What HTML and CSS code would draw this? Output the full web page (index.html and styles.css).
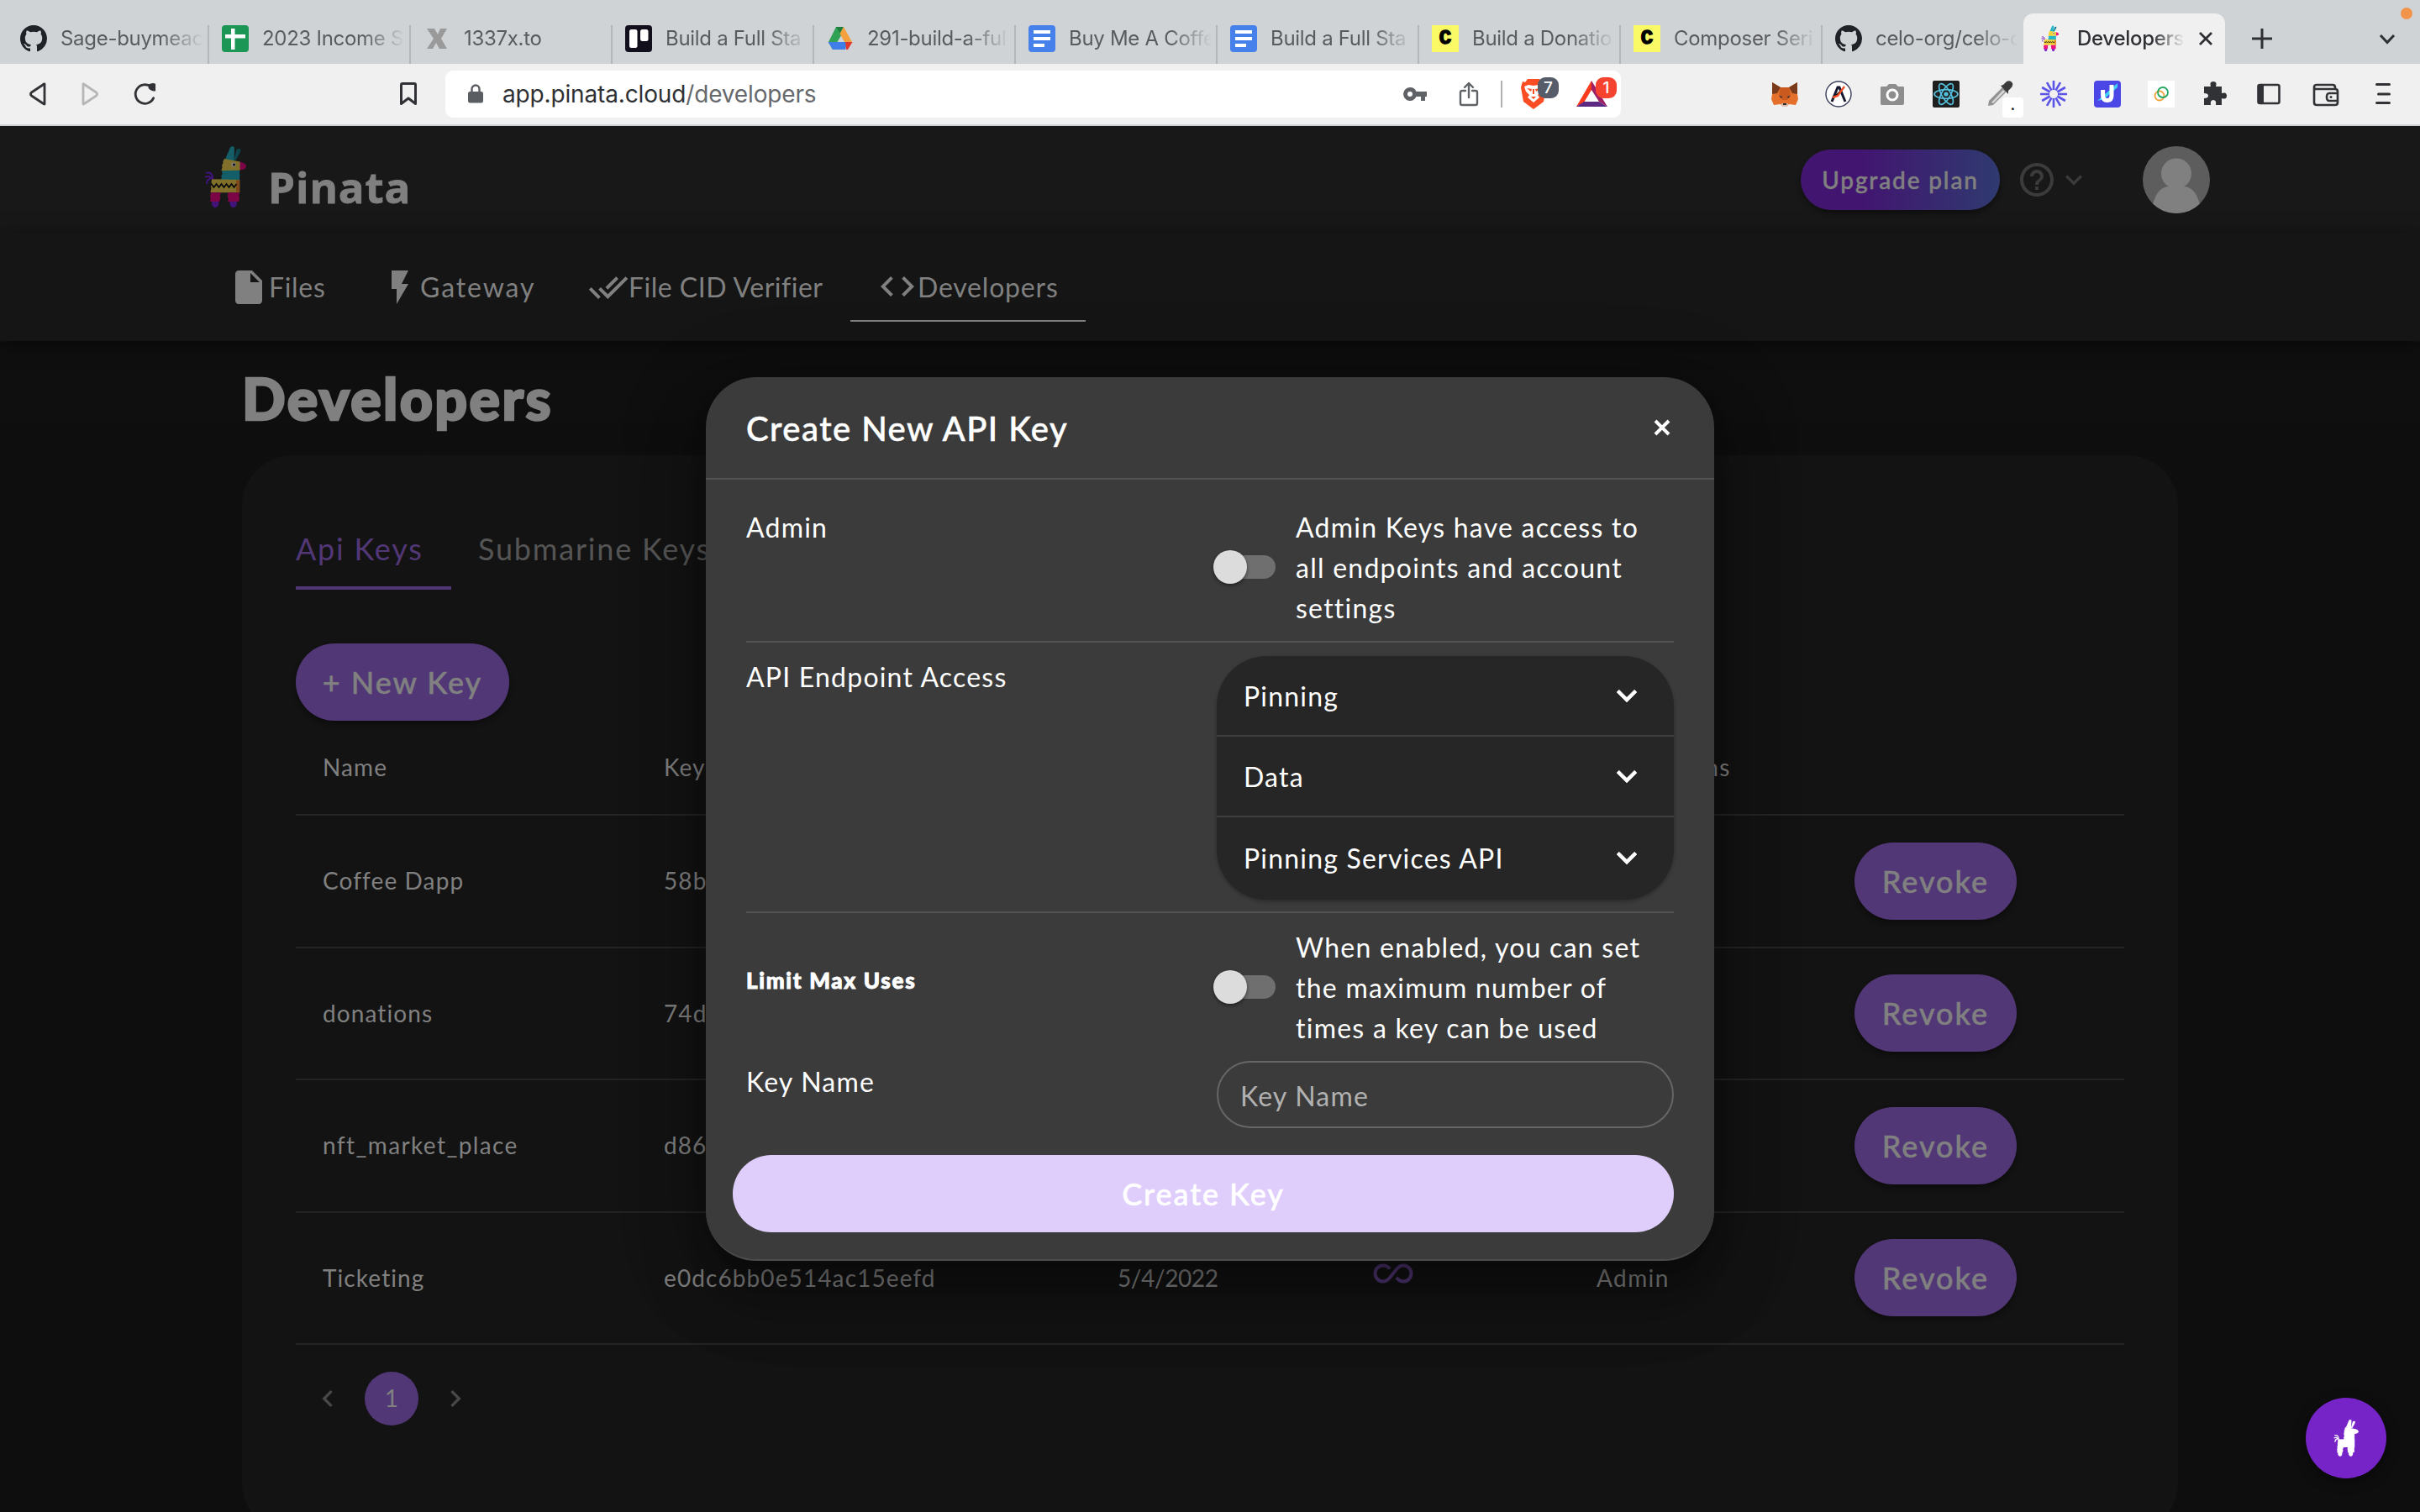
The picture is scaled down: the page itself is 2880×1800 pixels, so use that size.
FILE: index.html
```html
<!DOCTYPE html>
<html lang="en">
<head>
<meta charset="utf-8">
<title>Pinata – Developers</title>
<link rel="stylesheet" href="styles.css">
</head>
<body>
<svg class="defs" width="0" height="0">
  <symbol id="github" viewBox="0 0 16 16"><path fill="#1f2328" d="M8 0C3.58 0 0 3.58 0 8c0 3.54 2.29 6.53 5.47 7.59.4.07.55-.17.55-.38 0-.19-.01-.82-.01-1.49-2.01.37-2.53-.49-2.69-.94-.09-.23-.48-.94-.82-1.13-.28-.15-.68-.52-.01-.53.63-.01 1.08.58 1.23.82.72 1.21 1.87.87 2.33.66.07-.52.28-.87.51-1.07-1.78-.2-3.64-.89-3.64-3.95 0-.87.31-1.59.82-2.15-.08-.2-.36-1.02.08-2.12 0 0 .67-.21 2.2.82.64-.18 1.32-.27 2-.27.68 0 1.36.09 2 .27 1.53-1.04 2.2-.82 2.2-.82.44 1.1.16 1.92.08 2.12.51.56.82 1.27.82 2.15 0 3.07-1.87 3.75-3.65 3.95.29.25.54.73.54 1.48 0 1.07-.01 1.93-.01 2.2 0 .21.15.46.55.38A8.01 8.01 0 0016 8c0-4.42-3.58-8-8-8z"/></symbol>
  <symbol id="docs" viewBox="0 0 32 32"><rect width="32" height="32" rx="4" fill="#4680ea"/><path fill="#fff" d="M6 6h20v4H6zM6 14h20v4H6zM6 22h13v4H6z"/></symbol>
  <symbol id="llama" viewBox="0 0 52 76">
    <path fill="none" stroke="var(--violet)" stroke-width="2" d="M2 33q6-2 8 4v4M1 38q6-3 8 2M3 46q0-5 5-7"/>
    <path fill="var(--teal-dark)" d="M35 18l3.6-13q3-2 5 0l-1 4-5 9z"/>
    <path fill="var(--teal)" d="M24.8 17L31 2.500q2.500-2.500 5 0L35.500 19zM21.600 29.500h20.600V42H19l2.200-4-1.200-1 2-3.500-1-.5z"/>
    <path fill="var(--pink)" d="M42 19.500q8 1.500 8 5.500t-8 4.500z"/>
    <path fill="var(--yellow)" d="M23.900 16l18.700 3.500v10.200l-22.300.6 1.500-5-1-.5 2-4.500-.8-.3zM9 40.300L42.200 41v15.300H7.400l1.200-6-.9-.6 1.600-4.500-.8-.6z"/>
    <path fill="var(--orange)" d="M38 41.500h4.200v14h-4.200z"/>
    <path fill="none" stroke="var(--dark)" stroke-width="1.800" d="M8.500 46l3 4 3-4 3 4 3-4 3 4 3-4 3 4 3-4 3 4 3-4"/>
    <circle cx="35" cy="23" r="2.600" fill="var(--eye)"/><circle cx="35.500" cy="23" r="1.500" fill="var(--dark)"/>
    <ellipse cx="13.200" cy="68.500" rx="4.200" ry="5.800" fill="var(--violet)"/><ellipse cx="34.600" cy="68.500" rx="4.200" ry="5.800" fill="var(--violet)"/>
    <path fill="var(--pink)" d="M8 56.300h12l-1.500 5 1 1-1.500 4.700H6.800l1.200-4-1-1zM28.500 56.300h13.500l-.6 5 .6 1-.8 4.700H28l1-4-1.200-1z"/>
  </symbol>
  <symbol id="chev" viewBox="0 0 24 24"><path d="M7.410 8.590L12 13.170l4.590-4.580L18 10l-6 6-6-6z"/></symbol>
  <symbol id="back" viewBox="0 0 32 32"><path fill="none" stroke-width="2.800" stroke-linejoin="round" d="M25 4v24q-1 0-2-1L9.500 18q-2-2 0-4L23 5q1-1 2-1z"/></symbol>
</svg>

<header class="tabstrip">
  <div class="tab"><svg class="fav"><use href="#github"/></svg><span class="tab-title">Sage-buymeac</span></div>
  <div class="tab"><svg class="fav" viewBox="0 0 32 32"><rect width="32" height="32" rx="4" fill="#1b9655"/><path fill="#fff" d="M11 4h4.500v7H28v4.500H15.500V29H11V15.500H4V11h7z"/></svg><span class="tab-title">2023 Income S</span></div>
  <div class="tab"><svg class="fav" viewBox="0 0 32 32"><path fill="#9a9a9a" d="M4 4h9l4 7 3-7h8l-7 12 7 12h-9l-4-7-4 7H4l8-12z"/></svg><span class="tab-title">1337x.to</span></div>
  <div class="tab"><svg class="fav" viewBox="0 0 32 32"><rect width="32" height="32" rx="4" fill="#120f1c"/><rect x="5" y="5" width="9.500" height="22" rx="2.500" fill="#fff"/><rect x="18" y="5" width="9.500" height="14" rx="2.500" fill="#fff"/></svg><span class="tab-title">Build a Full Sta</span></div>
  <div class="tab"><svg class="fav" viewBox="0 0 32 32"><path fill="#31a155" d="M11 2h5l3 7L7 29 2 20z"/><path fill="#1f7f3e" d="M11 2h9l-4 8z"/><path fill="#f4a03c" d="M20 2l10 18h-9L15.500 10z"/><path fill="#3f7de8" d="M1.500 20H24l-2 9H7z"/><path fill="#e0382f" d="M22 20h8.500L25 29h-2z"/></svg><span class="tab-title">291-build-a-ful</span></div>
  <div class="tab"><svg class="fav"><use href="#docs"/></svg><span class="tab-title">Buy Me A Coffe</span></div>
  <div class="tab"><svg class="fav"><use href="#docs"/></svg><span class="tab-title">Build a Full Sta</span></div>
  <div class="tab"><span class="fav fav-c">C</span><span class="tab-title">Build a Donatio</span></div>
  <div class="tab"><span class="fav fav-c">C</span><span class="tab-title">Composer Seri</span></div>
  <div class="tab"><svg class="fav"><use href="#github"/></svg><span class="tab-title">celo-org/celo-c</span></div>
  <div class="tab active"><svg class="fav llama bright"><use href="#llama"/></svg><span class="tab-title">Developers</span>
    <svg class="tab-close" viewBox="0 0 18 18"><path d="M2 2l14 14M16 2L2 16"/></svg></div>
  <svg class="tab-plus" viewBox="0 0 26 26"><path d="M13 1v24M1 13h24"/></svg>
  <svg class="tab-more" viewBox="0 0 20 14"><path d="M2 2l8 8.500L18 2"/></svg>
  <span class="dot"></span>
</header>

<div class="toolbar">
  <svg class="ic nav-btn"><use href="#back"/></svg>
  <svg class="ic nav-btn flip"><use href="#back"/></svg>
  <svg class="ic reload" viewBox="0 0 32 32"><path fill="none" stroke="#303236" stroke-width="3" stroke-linecap="round" d="M28.500 21A12 12 0 1 1 25.500 7"/><path fill="#303236" d="M22 8.500V4q5-3 9-1v9q-5 1-9-3.500z"/></svg>
  <svg class="ic bookmark" viewBox="0 0 32 32"><path fill="none" stroke="#303236" stroke-width="3" stroke-linejoin="round" d="M7.500 5q0-1.500 1.500-1.500h14q1.500 0 1.500 1.500v22.500L16 21l-8.500 6.500z"/></svg>
  <div class="urlbar">
    <svg class="lock" viewBox="0 0 18 24"><rect y="9" width="18" height="13.500" rx="2.500" fill="#5a5d61"/><path fill="none" stroke="#5a5d61" stroke-width="2.400" d="M4.500 10V6a4.500 4.500 0 0 1 9 0v4"/></svg>
    <span class="url">app.pinata.cloud<span class="path">/developers</span></span>
    <svg class="key" viewBox="0 0 28 16"><path fill="#5f6266" fill-rule="evenodd" d="M8 0a8 8 0 0 1 7.500 5H28v6h-2v5h-5v-5h-5.500A8 8 0 1 1 8 0zm0 5a3 3 0 1 0 0 6 3 3 0 0 0 0-6z"/></svg>
    <svg class="share" viewBox="0 0 24 30"><path fill="none" stroke="#5f6266" stroke-width="2.400" stroke-linecap="round" stroke-linejoin="round" d="M8 11H4q-2 0-2 2v13q0 2 2 2h16q2 0 2-2V13q0-2-2-2h-4M12 19V2M7 7l5-5 5 5"/></svg>
    <span class="sep"></span>
    <div class="badged brave"><svg viewBox="0 0 30 36"><path fill="#fb4d24" d="M8 0h14l3 4 3-1 2 7-3 17-12 9-12-9L0 10l2-7 3 1z"/><path fill="#fff" d="M4 9l5-2 6 1 6-1 5 2-2 6-4 4 2 3-7 6-7-6 2-3-4-4z"/><path fill="#fb4d24" d="M7 11l6 1-1 3zM23 11l-6 1 1 3zM12 21h6l-3 3zM14 12h2v6h-2z"/></svg><span class="badge gray">7</span></div>
    <div class="badged bat"><svg viewBox="0 0 38 32"><path fill="#fb3b1e" d="M18 0v11L9 26 0 31z"/><path fill="#9e1f63" d="M18 0l19 31-10-6-9-14z"/><path fill="#5c2a83" d="M0 31l9-6h18l10 6z"/></svg><span class="badge red">1</span></div>
  </div>
  <div class="extensions">
    <svg class="ic" viewBox="0 0 32 32"><path fill="#e4702c" d="M1 2l10 6h10l10-6v14l1 6-3 7-8-1-3 3h-4l-3-3-8 1-3-7 1-6z"/><path fill="#793b1c" d="M1 2l10 6-4 7-6 1zM31 2L21 8l4 7 6 1z"/><path fill="#c9591f" d="M11 8h10l2 9-4 6h-6l-4-6z"/><path fill="#d8c1b3" d="M12 27h8l-1 4h-6z"/><path fill="#2b2b33" d="M9 18l4 1-1 2zM23 18l-4 1 1 2zM14 27h4v2h-4z"/></svg>
    <svg class="ic" viewBox="0 0 32 32"><circle cx="16" cy="16" r="15" fill="#fff" stroke="#3a3f5c" stroke-width="1.400"/><path fill="none" stroke="#15182e" stroke-width="3" d="M8 25l7-17h2l7 17"/><path stroke="#f04e23" stroke-width="2.400" d="M9 20l6-2 8-11"/></svg>
    <svg class="ic" viewBox="0 0 32 32"><path fill="#8d8d8d" d="M3 7h6l3-3h8l3 3h6q1 0 1 2v18q0 2-2 2H3q-1 0-1-2V9q0-2 1-2z"/><circle cx="16" cy="17" r="6" fill="#8d8d8d" stroke="#fff" stroke-width="3"/></svg>
    <svg class="ic" viewBox="0 0 32 32"><rect width="32" height="32" rx="2" fill="#1e1e1e"/><g fill="none" stroke="#53c1de" stroke-width="1.700"><ellipse cx="16" cy="16" rx="14" ry="5.300"/><ellipse cx="16" cy="16" rx="14" ry="5.300" transform="rotate(60 16 16)"/><ellipse cx="16" cy="16" rx="14" ry="5.300" transform="rotate(120 16 16)"/></g><circle cx="16" cy="16" r="2.600" fill="#53c1de"/></svg>
    <div class="badged pipette"><svg class="ic" viewBox="0 0 32 32"><path fill="#929292" d="M2 30l1-6L19 8l5 5L8 29z"/><path fill="#d8d8d8" d="M6 26L20 11l2 2L8 27z"/><path fill="#3b3b3b" d="M17 6l3-1 4-4q5-2 7 2 1 3-2 6l-3 3v4z"/></svg><span class="badge white">.</span></div>
    <svg class="ic" viewBox="0 0 32 32"><g stroke="#5a55e6" stroke-width="2.600"><path d="M16 0v11M16 21v11M0 16h11M21 16h11M8 2.140l5.500 9.530M18.500 20.330l5.500 9.530M2.140 8l9.530 5.500M20.330 18.500l9.530 5.500M2.140 24l9.530-5.500M20.330 13.500l9.530-5.500M8 29.860l5.500-9.530M18.500 11.670l5.500-9.530"/></g></svg>
    <svg class="ic" viewBox="0 0 32 32"><rect width="32" height="32" rx="4" fill="#4b47e6"/><path fill="#3fd0f2" d="M28 3L4 24l8-2L28 8z"/><path fill="none" stroke="#fff" stroke-width="5" d="M21 5v12.500q0 6-5.200 6T10.600 17.500V11"/></svg>
    <svg class="ic" viewBox="0 0 32 32"><rect width="32" height="32" fill="#fff"/><circle cx="14" cy="18" r="5.500" fill="none" stroke="#f2a23c" stroke-width="1.800"/><circle cx="18" cy="14" r="6" fill="none" stroke="#22a860" stroke-width="1.800"/></svg>
    <svg class="ic" viewBox="0 0 32 32"><path fill="#303236" d="M3 7h8q-2-6 3-6t3 6h7v8q6-2 6 3t-6 3v8h-7q1-6-3-6t-3 6H3v-8q5 0 5-3t-5-3z"/></svg>
    <svg class="ic" viewBox="0 0 32 32"><rect x="3.500" y="5" width="25" height="22" rx="2" fill="none" stroke="#303236" stroke-width="2.600"/><path fill="#303236" d="M3 5h7v22H3z"/></svg>
    <svg class="ic wide" viewBox="0 0 32 32"><path fill="none" stroke="#303236" stroke-width="2.600" d="M2 8v18q0 3 3 3h22q3 0 3-3V13q0-3-3-3H5q-3 0-3-2.500T5 5h19q3 0 3 3v2M31 15H20q-3 0-3 4.500t3 4.500h11"/><circle cx="22" cy="19.500" r="1.500" fill="#303236"/></svg>
    <svg class="ic wide" viewBox="0 0 32 32"><path stroke="#303236" stroke-width="3" stroke-linecap="round" d="M8.500 4.500h15M10.500 16h13M8.500 26.500h15"/></svg>
  </div>
</div>

<div class="app-header">
  <svg class="brand-mark llama dim"><use href="#llama"/></svg>
  <span class="brand">Pinata</span>
  <button class="upgrade">Upgrade plan</button>
  <svg class="help" viewBox="2 2 20 20"><path d="M11 18h2v-2h-2v2zm1-16C6.480 2 2 6.480 2 12s4.480 10 10 10 10-4.480 10-10S17.520 2 12 2zm0 18c-4.410 0-8-3.590-8-8s3.590-8 8-8 8 3.590 8 8-3.590 8-8 8zm0-14c-2.210 0-4 1.790-4 4h2c0-1.100.9-2 2-2s2 .9 2 2c0 2-3 1.750-3 5h2c0-2.250 3-2.500 3-5 0-2.210-1.790-4-4-4z"/></svg>
  <svg class="help-chev"><use href="#chev"/></svg>
  <svg class="avatar" viewBox="0 0 80 80"><clipPath id="round"><circle cx="40" cy="40" r="40"/></clipPath><g clip-path="url(#round)"><path fill="#5d5d5d" d="M0 0h80v80H0z"/><circle cx="40" cy="32.500" r="18" fill="#808080"/><path fill="#808080" d="M12 70q5-22 20-22h16q15 0 20 22v12H12z"/></g></svg>
</div>

<nav class="app-nav">
  <a class="nav-files"><svg viewBox="0 0 24 24"><path d="M6 2c-1.100 0-2 .9-2 2v16c0 1.100.9 2 2 2h12c1.100 0 2-.9 2-2V8l-6-6H6zm7 7V3.500L18.500 9H13z"/></svg>Files</a>
  <a class="nav-gateway"><svg viewBox="0 0 24 24"><path d="M7 2v11h3v9l7-12h-4l4-8z"/></svg>Gateway</a>
  <a class="nav-cid"><svg viewBox="0 0 24 24"><path d="M18 7l-1.410-1.410-6.340 6.340 1.410 1.410L18 7zm4.240-1.410L11.660 16.170 7.480 12l-1.410 1.410L11.660 19l12-12-1.420-1.410zM.41 13.410L6 19l1.410-1.410L1.830 12 .41 13.410z"/></svg>File CID Verifier</a>
  <a class="nav-dev"><svg viewBox="0 0 24 24"><path d="M9.400 16.600L4.800 12l4.600-4.600L8 6l-6 6 6 6 1.400-1.400zm5.200 0l4.600-4.600-4.600-4.600L16 6l6 6-6 6-1.400-1.400z"/></svg>Developers</a>
</nav>

<main>
  <h1>Developers</h1>
  <section class="card">
    <div class="card-tabs"><span class="on">Api Keys</span><span>Submarine Keys</span></div>
    <button class="btn new-key">+ New Key</button>
    <div class="table">
      <div class="row head"><span>Name</span><span>Key</span><span></span><span></span><span class="perm-head">Permissions</span><span></span></div>
      <div class="row"><span>Coffee Dapp</span><span>58b</span><span></span><span></span><span></span><button class="btn">Revoke</button></div>
      <div class="row"><span>donations</span><span>74d</span><span></span><span></span><span></span><button class="btn">Revoke</button></div>
      <div class="row"><span class="wider">nft_market_place</span><span>d86</span><span></span><span></span><span></span><button class="btn">Revoke</button></div>
      <div class="row"><span>Ticketing</span><span>e0dc6bb0e514ac15eefd</span><span class="date">5/4/2022</span><span><svg class="inf" viewBox="0 0 48 24"><path d="M20 17c-2.500 3-5 4.500-8 4.500A9.500 9.500 0 0 1 12 2.500c4 0 6.500 2 8 4M28 17c2 2.500 4.500 4.500 8 4.500a9.500 9.500 0 0 0 0-19c-3 0-5.500 1.500-8 4.500L20 17"/></svg></span><span class="wider">Admin</span><button class="btn">Revoke</button></div>
    </div>
    <div class="pager">
      <svg class="left"><use href="#chev"/></svg><span class="page">1</span><svg class="right"><use href="#chev"/></svg>
    </div>
  </section>
</main>

<div class="modal">
  <div class="modal-head"><h2>Create New API Key</h2><svg viewBox="0 0 20 20"><path d="M2 2l16 16M18 2L2 18"/></svg></div>
  <div class="modal-body">
    <div class="field admin"><span class="label">Admin</span>
      <div class="control"><span class="toggle"></span><p>Admin Keys have access to<br>all endpoints and account<br>settings</p></div></div>
    <div class="field endpoints"><span class="label">API Endpoint Access</span>
      <div class="accordion">
        <div><span>Pinning</span><svg><use href="#chev"/></svg></div>
        <div><span>Data</span><svg><use href="#chev"/></svg></div>
        <div><span>Pinning Services API</span><svg><use href="#chev"/></svg></div>
      </div></div>
    <div class="field limit"><span class="label strong">Limit Max Uses</span>
      <div class="control"><span class="toggle"></span><p>When enabled, you can set<br>the maximum number of<br>times a key can be used</p></div></div>
    <div class="field name"><span class="label">Key Name</span><div class="input">Key Name</div></div>
    <button class="create">Create Key</button>
  </div>
</div>

<div class="fab"><svg class="llama mono"><use href="#llama"/></svg></div>
</body>
</html>
```
FILE: styles.css
```css
* { box-sizing: border-box; }
body {
  margin: 0; width: 2880px; height: 1800px; overflow: hidden; position: relative;
  display: flex; flex-direction: column;
  background: #0f0f0f; color: #808080;
  font-family: Lato, "Open Sans", sans-serif; font-size: 32px; letter-spacing: 1.1px;
}
svg { display: block; flex: none; }
button { border: 0; font: inherit; letter-spacing: inherit; color: inherit; padding: 0; }
h1, h2, p { margin: 0; }
.defs { position: absolute; }

/* browser tabs */
.tabstrip {
  height: 76px; flex: none; display: flex; align-items: flex-end; padding-left: 8px;
  background: #d0d3d6; position: relative;
  font-family: Inter, sans-serif; font-size: 24px; letter-spacing: -0.3px; color: #595b5f;
}
.tab { width: 240px; height: 60px; display: flex; align-items: center; padding-left: 16px; gap: 16px; position: relative; }
.tab::after { content: ""; position: absolute; right: -1px; top: 14px; bottom: 0; width: 2px; background: #b3b6ba; }
.tab:nth-child(10)::after, .tab.active::after { display: none; }
.tab.active { background: #f0f0f0; border-radius: 12px 12px 0 0; color: #2e3034; font-weight: 500; }
.fav { width: 32px; height: 32px; flex: none; }
.fav-c { background: #f9fa66; color: #000; font: bold 24px/31px "Liberation Mono", monospace; text-align: center; letter-spacing: 0; -webkit-text-stroke: 1.5px #000; }
.tab-title {
  width: 170px; overflow: hidden; white-space: nowrap; line-height: 32px;
  -webkit-mask-image: linear-gradient(90deg, #000 70%, transparent 100%);
  mask-image: linear-gradient(90deg, #000 70%, transparent 100%);
}
.active .tab-title { width: 128px; }
.tab-close { width: 18px; height: 18px; stroke: #2e3034; stroke-width: 2.8; fill: none; }
.tab-plus { width: 26px; height: 26px; margin: 0 0 17px 31px; stroke: #2e3034; stroke-width: 3; }
.tab-more { width: 20px; height: 14px; margin: 0 0 22px 126px; stroke: #2e3034; stroke-width: 3; fill: none; }
.dot { position: absolute; left: 2857px; top: 9px; width: 14px; height: 14px; border-radius: 50%; background: #f3944d; }

/* browser toolbar */
.toolbar {
  height: 74px; flex: none; display: flex; align-items: center; padding-left: 28px;
  background: #f0f0f0; border-bottom: 2px solid #d0d3d6;
}
.ic { width: 32px; height: 32px; }
.toolbar > .ic { margin-right: 32px; }
.nav-btn { stroke: #303236; }
.nav-btn.flip { transform: scaleX(-1); stroke: #b5b6b8; }
.toolbar > .reload { width: 30px; height: 30px; }
.toolbar > .bookmark { margin: 0 28px 0 252px; }
.urlbar {
  width: 1399px; height: 56px; border-radius: 9px; background: #fff; display: flex; align-items: center; padding-left: 27px;
  font-family: Inter, sans-serif; font-size: 28px; letter-spacing: -0.15px; color: #2e3034;
}
.lock { width: 18px; height: 24px; }
.url { margin-left: 23px; width: 1072px; line-height: 40px; }
.path { color: #66686c; }
.key { width: 28px; height: 16px; }
.share { width: 24px; height: 30px; margin-left: 38px; }
.sep { width: 2px; height: 32px; background: #b0b0b0; margin: 0 22px 0 26px; }
.badged { position: relative; }
.brave svg { width: 30px; height: 36px; }
.bat { margin-left: 36px; }
.bat svg { width: 38px; height: 32px; }
.badge {
  position: absolute; width: 25px; height: 25px; border-radius: 9px; text-align: center; letter-spacing: 0;
  font: 500 19px/25px Inter, sans-serif; color: #fff;
}
.gray { left: 20px; top: -2px; background: #565c69; }
.red { left: 23px; top: -4px; background: #f5432f; }
.white { left: 19px; top: 20px; height: 24px; background: #fff; color: #222; border-radius: 4px; line-height: 18px; }
.extensions { display: flex; gap: 32px; margin-left: 179px; }
.wide { margin-left: 4px; }

/* pinata header */
.app-header { height: 127px; flex: none; display: flex; align-items: center; padding: 0 250px 0 243px; background: #181818; }
.llama { --teal: #21b7c9; --teal-dark: #14808d; --yellow: #f2d13a; --pink: #f0127f; --violet: #7a24c9; --orange: #f08a2c; --dark: #141414; --eye: #fff; }
.dim { --teal: #135e68; --teal-dark: #0d444b; --yellow: #80702a; --pink: #7c0547; --violet: #41147a; --orange: #80491c; --dark: #0c0c0c; --eye: #808080; }
.mono { --teal: #fff; --teal-dark: #fff; --yellow: #fff; --pink: #fff; --violet: #fff; --orange: #fff; --dark: #fff; }
.brand-mark { width: 52px; height: 76px; margin-top: -5px; }
.brand { margin: 16px auto 0 24px; font: 700 51px/60px "Open Sans", sans-serif; letter-spacing: .9px; -webkit-text-stroke: .8px #808080; }
.upgrade {
  width: 237px; height: 72px; border-radius: 36px; margin-top: 1px; font-size: 28px; font-weight: 500; letter-spacing: 1.85px; line-height: 66px;
  background: linear-gradient(90deg, #421570 30%, #2f3a70 100%); box-shadow: 0 4px 6px rgba(0,0,0,.4);
}
.help { width: 40px; height: 40px; margin-left: 24px; fill: #3b3b3b; }
.help-chev { width: 40px; height: 40px; margin-left: 4px; fill: #3b3b3b; }
.avatar { width: 80px; height: 80px; margin-left: 62px; }

.app-nav { height: 129px; flex: none; display: flex; align-items: center; padding-left: 240px; background: #151515; box-shadow: 0 4px 20px rgba(0,0,0,.5); }
.app-nav a { height: 83px; padding: 2px 32px 0; display: flex; align-items: center; white-space: nowrap; border-bottom: 2px solid transparent; }
.app-nav svg { width: 48px; height: 48px; fill: #808080; }
.app-nav .nav-files { width: 180px; letter-spacing: .7px; }
.app-nav .nav-gateway { width: 248px; letter-spacing: 1.9px; }
.app-nav .nav-cid { width: 344px; letter-spacing: .5px; }
.app-nav .nav-dev { width: 280px; letter-spacing: .8px; border-color: #808080; padding-top: 1px; }

/* page */
main { flex: none; padding: 28px 288px 0; background: linear-gradient(180deg, transparent, #0e0e0e 200px); }
h1 { height: 108px; font-size: 68px; line-height: 80px; font-weight: 900; letter-spacing: 2.4px; -webkit-text-stroke: 2.6px #808080; }
.card { height: 1284px; border-radius: 60px; background: #131313; padding: 83px 64px 0; }
.card-tabs { display: flex; gap: 32px; font-size: 36px; letter-spacing: 1.8px; color: #555; }
.card-tabs span { height: 77px; line-height: 56px; }
.card-tabs .on { width: 185px; color: #523777; border-bottom: 4px solid #523777; }
.btn {
  display: block; width: 193px; height: 92px; border-radius: 46px; background: #523777; color: #808080;
  font-size: 36px; font-weight: 500; letter-spacing: 2px; box-shadow: 0 4px 6px rgba(0,0,0,.35);
}
.btn, .create, .upgrade { -webkit-text-stroke: .5px currentColor; }
.new-key { width: 254px; margin-top: 64px; }
.row {
  display: grid; grid-template-columns: 406px 540px 304px 266px 306px 1fr; align-items: center;
  height: 157.5px; padding-left: 32px; border-bottom: 2px solid #242424; font-size: 28px;
}
.row span { margin-top: -1px; }
.row .btn { margin-left: 1px; }
.head { height: 113px; }
.perm-head { letter-spacing: 1.3px; }
.wider { letter-spacing: 1.4px; }
.date { letter-spacing: -.4px; }
.inf { width: 48px; height: 24px; margin-top: -10px; fill: none; stroke: #523777; stroke-width: 4; }
.pager { display: flex; align-items: center; height: 64px; margin-top: 32px; padding-left: 18px; font-size: 28px; gap: 24px; }
.pager svg { width: 40px; height: 40px; fill: #484848; }
.left { transform: rotate(90deg); }
.right { transform: rotate(-90deg); }
.page { width: 64px; height: 64px; border-radius: 50%; background: #523777; text-align: center; line-height: 63px; padding-left: 1px; }

/* modal */
.modal {
  position: absolute; left: 840px; top: 449px; width: 1200px; height: 1052px; border-radius: 60px; overflow: hidden;
  background: #3b3b3b; color: #fff; border-bottom: 2px solid #4c4c4c;
  box-shadow: 0 22px 30px -14px rgba(0,0,0,.3), 0 48px 76px 6px rgba(0,0,0,.2), 0 18px 92px 16px rgba(0,0,0,.2);
}
.modal-head { height: 122px; padding: 0 52px 0 48px; display: flex; align-items: center; justify-content: space-between; border-bottom: 2px solid #525252; }
.modal-head h2 { font-size: 40px; font-weight: 500; letter-spacing: 1.45px; padding-top: 1px; -webkit-text-stroke: .5px #fff; }
.modal-head svg { width: 20px; height: 20px; stroke: #fff; stroke-width: 4; }
.modal-body { padding: 0 48px; line-height: 48px; }
.field { display: grid; grid-template-columns: 560px 544px; align-items: start; }
.label { padding-top: 1px; letter-spacing: 1.2px; }
.admin { height: 194px; padding-top: 32px; border-bottom: 2px solid #525252; }
.endpoints { height: 322px; padding-top: 16px; border-bottom: 2px solid #525252; }
.limit { height: 176px; padding-top: 16px; }
.name { height: 112px; }
.strong { font-size: 26px; font-weight: 900; letter-spacing: 1.7px; padding-top: 40px; -webkit-text-stroke: .9px #fff; }
.control { display: flex; align-items: center; margin-left: -4px; gap: 24px; }
.control p { letter-spacing: 1.25px; white-space: nowrap; padding-top: 1px; margin-bottom: -1px; }
.toggle { width: 74px; height: 40px; position: relative; }
.toggle::before { content: ""; position: absolute; left: 6px; right: 0; top: 6px; height: 28px; border-radius: 14px; background: #6f6f6f; }
.toggle::after { content: ""; position: absolute; left: 0; top: 0; width: 40px; height: 40px; border-radius: 50%; background: #dcdcdc; box-shadow: 0 2px 4px rgba(0,0,0,.45); }
.accordion { height: 290px; border-radius: 60px; background: #262626; overflow: hidden; box-shadow: 0 2px 4px rgba(0,0,0,.3); letter-spacing: 1.2px; }
.accordion div { height: 96px; padding: 0 32px; display: flex; align-items: center; justify-content: space-between; border-bottom: 2px solid #3e3e3e; }
.accordion div:last-child { border-bottom: 0; }
.accordion span { padding-top: 2px; }
.accordion svg { width: 48px; height: 48px; fill: #fff; stroke: #fff; stroke-width: .3; }
.input { height: 80px; border: 2px solid #666; border-radius: 40px; padding-left: 26px; line-height: 80px; color: #b1b1b1; letter-spacing: 1.2px; }
.create { display: block; width: 1120px; height: 92px; margin-left: -16px; border-radius: 46px; background: #dfcdfb; color: #fff; font-size: 36px; font-weight: 500; letter-spacing: 1.95px; }

.fab { position: absolute; left: 2744px; top: 1664px; width: 96px; height: 96px; border-radius: 50%; background: #7624c8; display: flex; align-items: center; justify-content: center; box-shadow: 0 4px 16px rgba(0,0,0,.4); }
.fab svg { width: 31px; height: 46px; }
```
